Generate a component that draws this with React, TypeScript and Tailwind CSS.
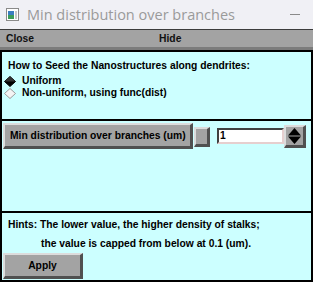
const font = { fontFamily: '"Liberation Sans", Arial, sans-serif' };

function Bevel({ className = "", children }: { className?: string; children?: React.ReactNode }) {
  return (
    <div
      className={
        "bg-[#a3a3a3] border-t-2 border-l-2 border-b-[3px] border-r-[3px] border-t-[#dcdcdc] border-l-[#dcdcdc] border-b-[#505050] border-r-[#505050] flex items-center " +
        className
      }
    >
      {children}
    </div>
  );
}

function Diamond({ on }: { on: boolean }) {
  return (
    <svg width="12" height="11" viewBox="0 0 12 11" className="mr-[6px] shrink-0">
      <polygon
        points="6,0.5 11.5,5.5 6,10.5 0.5,5.5"
        fill={on ? "#000" : "#f4f4f4"}
        stroke={on ? "#000" : "#9a9a9a"}
        strokeWidth="1"
      />
      {on && <polygon points="6,0.5 11.5,5.5 6,5.5 0.5,5.5" fill="#333" />}
    </svg>
  );
}

export default function App() {
  return (
    <div className="w-[313px] h-[282px] flex flex-col overflow-hidden bg-white" style={font}>
      <div className="h-[29px] shrink-0 bg-[#f0f0f5] flex items-center pl-[6px] border-b border-[#3c3c3c] box-content">
        <svg width="13" height="13" viewBox="0 0 13 13">
          <rect x="0.5" y="0.5" width="12" height="12" fill="#fff" stroke="#8a8a8a" />
          <rect x="2" y="3" width="6" height="8" fill="#3a7ec0" />
          <rect x="2" y="7" width="6" height="4" fill="#3c9c5a" />
          <rect x="9" y="3" width="2" height="8" fill="#c8c8c8" />
        </svg>
        <span
          className="ml-[8px] text-[14.5px] text-[#9a9a9a]"
          style={{ fontFamily: '"Open Sans", "Noto Sans", sans-serif' }}
        >
          Min distribution over branches
        </span>
        <div className="ml-auto mr-[13px] w-[10px] h-px bg-[#8a8a8a]" />
      </div>

      <div className="h-[17px] shrink-0 bg-[#a3a3a3] flex items-center text-[10.3px] font-bold text-[#111]">
        <span className="ml-[6px]">Close</span>
        <span className="ml-[125px]">Hide</span>
      </div>
      <div className="h-[3px] shrink-0 bg-[#7c7c7c]" />

      <div className="flex-1 flex flex-col bg-[#ccffff] border-x-2 border-t-2 border-black text-[10.3px] font-bold text-black leading-[12px]">
        <div className="h-[69px] border-b-2 border-black pt-[8px] pl-[6px] flex flex-col">
          <div className="mb-[3px]">How to Seed the Nanostructures along dendrites:</div>
          <div className="flex items-center -ml-[4px]">
            <Diamond on />
            Uniform
          </div>
          <div className="flex items-center -ml-[4px]">
            <Diamond on={false} />
            Non-uniform, using func(dist)
          </div>
        </div>

        <div className="h-[92px] border-b-2 border-black pt-[2px] pl-px flex items-start">
          <Bevel className="h-[26px] w-[190px] pl-[5px]">Min distribution over branches (um)</Bevel>
          <Bevel className="ml-px mt-[4px] h-[20px] w-[16px]" />
          <div className="ml-[7px] mt-[5px] h-[16px] w-[67px] bg-white border-t-2 border-l-2 border-t-[#404040] border-l-[#404040] border-b-2 border-r-2 border-b-[#e6cfcf] border-r-[#e6cfcf] flex items-center pl-[1px] font-bold">
            1
          </div>
          <Bevel className="mt-[2px] h-[23px] w-[22px] justify-center">
            <svg width="13" height="16" viewBox="0 0 13 16">
              <polygon points="6.5,0 13,7.5 0,7.5" fill="#000" />
              <polygon points="0,8.5 13,8.5 6.5,16" fill="#000" />
            </svg>
          </Bevel>
        </div>

        <div className="flex-1 border-b-2 border-black pt-[6px] pl-px flex flex-col">
          <div className="pl-[5px]">Hints: The lower value, the higher density of stalks;</div>
          <div className="pl-[38px] mt-[7px]">the value is capped from below at 0.1 (um).</div>
          <Bevel className="mt-[3px] h-[26px] w-[80px] justify-center">Apply</Bevel>
        </div>
      </div>
    </div>
  );
}
